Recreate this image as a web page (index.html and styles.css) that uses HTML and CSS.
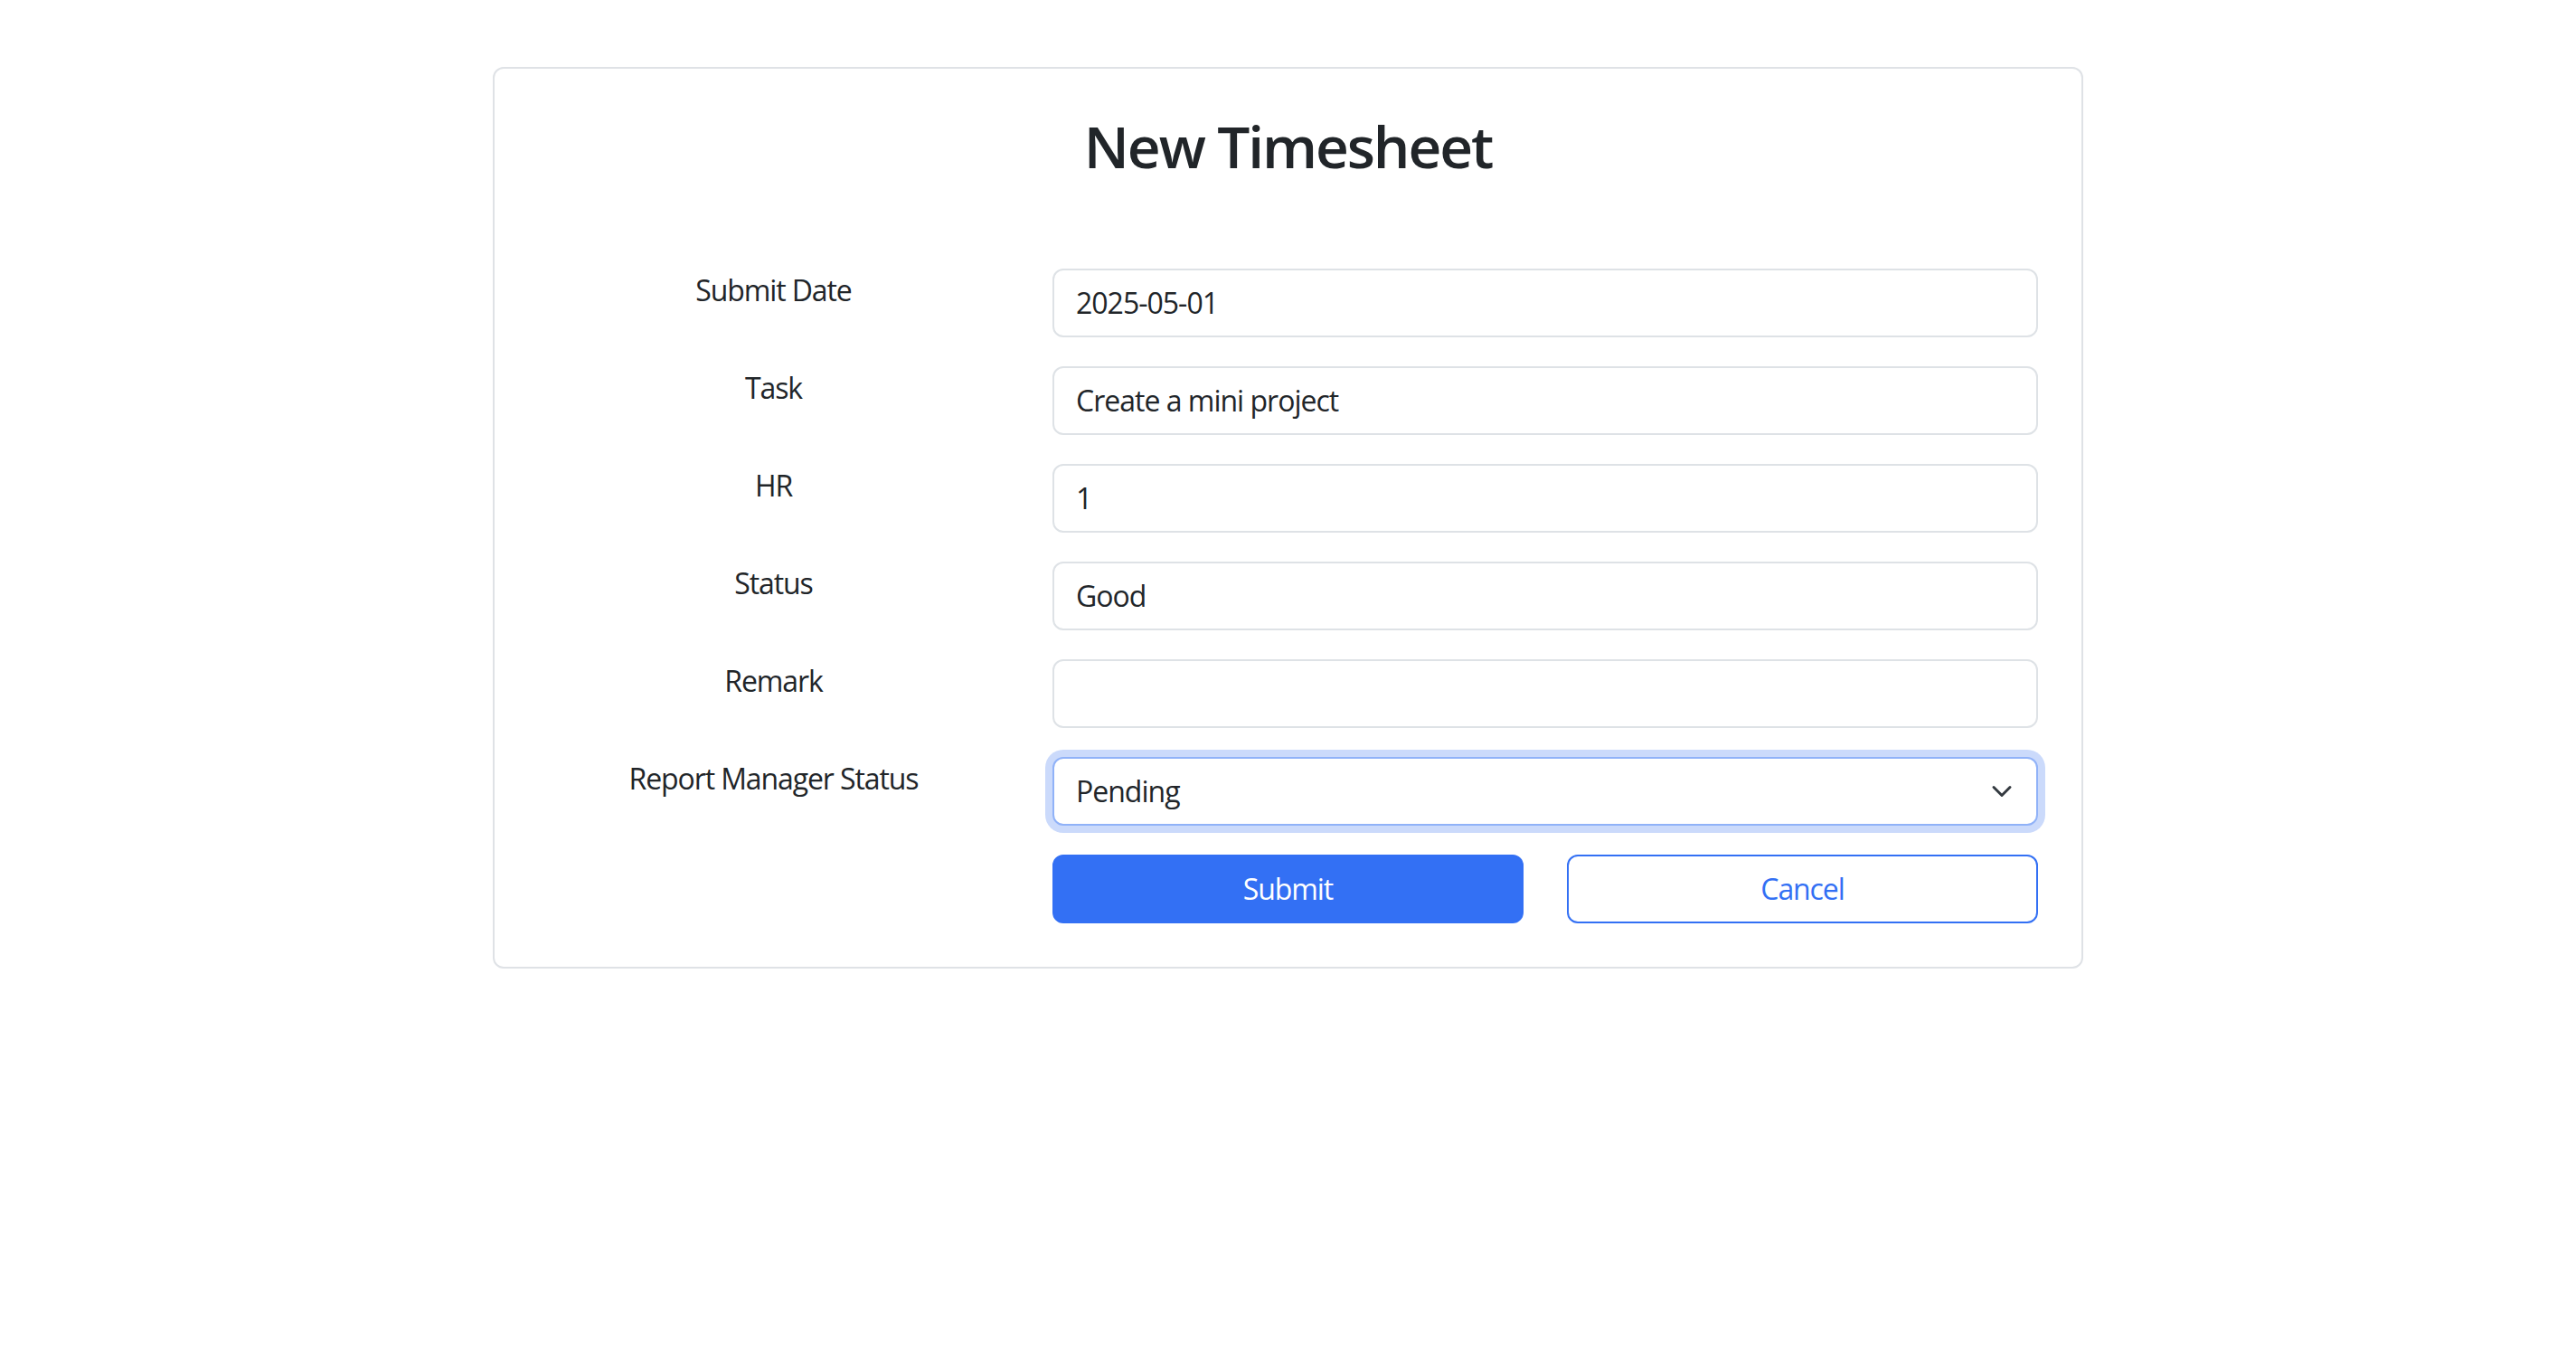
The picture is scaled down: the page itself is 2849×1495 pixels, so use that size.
FILE: index.html
```html
<!DOCTYPE html>
<html lang="en">
<head>
<meta charset="utf-8">
<title>New Timesheet</title>
<link rel="stylesheet" href="styles.css">
</head>
<body>
<main class="page">
  <section class="card">
    <h2 class="title">New Timesheet</h2>
    <form class="form">
      <div class="row">
        <label class="label">Submit Date</label>
        <input class="control" type="text" value="2025-05-01">
      </div>
      <div class="row">
        <label class="label">Task</label>
        <input class="control" type="text" value="Create a mini project">
      </div>
      <div class="row">
        <label class="label">HR</label>
        <input class="control" type="text" value="1">
      </div>
      <div class="row">
        <label class="label">Status</label>
        <input class="control" type="text" value="Good">
      </div>
      <div class="row">
        <label class="label">Remark</label>
        <input class="control" type="text" value="">
      </div>
      <div class="row">
        <label class="label">Report Manager Status</label>
        <div class="select-wrap">
          <select class="control select focused">
            <option>Pending</option>
            <option>Approved</option>
            <option>Rejected</option>
          </select>
          <svg class="chevron" viewBox="0 0 16 16" width="32" height="24" aria-hidden="true"><path d="M2 5l6 6 6-6" fill="none" stroke="#343a40" stroke-width="2" stroke-linecap="round" stroke-linejoin="round"/></svg>
        </div>
      </div>
      <div class="row last">
        <div></div>
        <div class="buttons">
          <button type="button" class="btn primary">Submit</button>
          <button type="button" class="btn outline">Cancel</button>
        </div>
      </div>
    </form>
  </section>
</main>
</body>
</html>
```

FILE: styles.css
```css
* { box-sizing: border-box; }
html, body {
  margin: 0;
  padding: 0;
  background: #ffffff;
}
body {
  font-family: "Open Sans", "Noto Sans", "Liberation Sans", sans-serif;
  font-size: 32px;
  line-height: 1.5;
  color: #212529;
}
.page {
  padding-top: 74px;
}
.card {
  width: 1759px;
  margin: 0 auto;
  border: 2px solid #dfe2e6;
  border-radius: 12px;
  padding: 48px;
}
.title {
  margin: 0 0 96px;
  text-align: center;
  font-size: 64px;
  line-height: 1.2;
  font-weight: 600;
  letter-spacing: -2.1px;
  color: #212529;
}
.form {
  display: flex;
  flex-direction: column;
  gap: 32px;
}
.row {
  display: grid;
  grid-template-columns: 521px 1fr;
  column-gap: 48px;
  align-items: start;
}
.label {
  text-align: center;
  letter-spacing: -1.1px;
}
.control {
  display: block;
  width: 100%;
  height: 76px;
  padding: 12px 24px;
  font-family: inherit;
  font-size: 32px;
  line-height: 1.5;
  letter-spacing: -1px;
  color: #212529;
  background: #ffffff;
  border: 2px solid #dee2e6;
  border-radius: 12px;
  outline: none;
}
.select-wrap {
  position: relative;
}
.select {
  appearance: none;
  -webkit-appearance: none;
  padding-right: 90px;
}
.select.focused {
  border-color: #90b2f8;
  box-shadow: 0 0 0 8px #cbdafb;
}
.chevron {
  position: absolute;
  right: 24px;
  top: 50%;
  transform: translateY(-50%);
  pointer-events: none;
}
.buttons {
  display: grid;
  grid-template-columns: 1fr 1fr;
  column-gap: 48px;
}
.btn {
  height: 76px;
  padding: 12px 24px;
  font-family: inherit;
  font-size: 32px;
  line-height: 1.5;
  letter-spacing: -1.1px;
  border-radius: 12px;
  border: 2px solid #3370f4;
  cursor: pointer;
}
.primary {
  background: #3370f4;
  color: #ffffff;
}
.outline {
  background: #ffffff;
  color: #3370f4;
}
```
